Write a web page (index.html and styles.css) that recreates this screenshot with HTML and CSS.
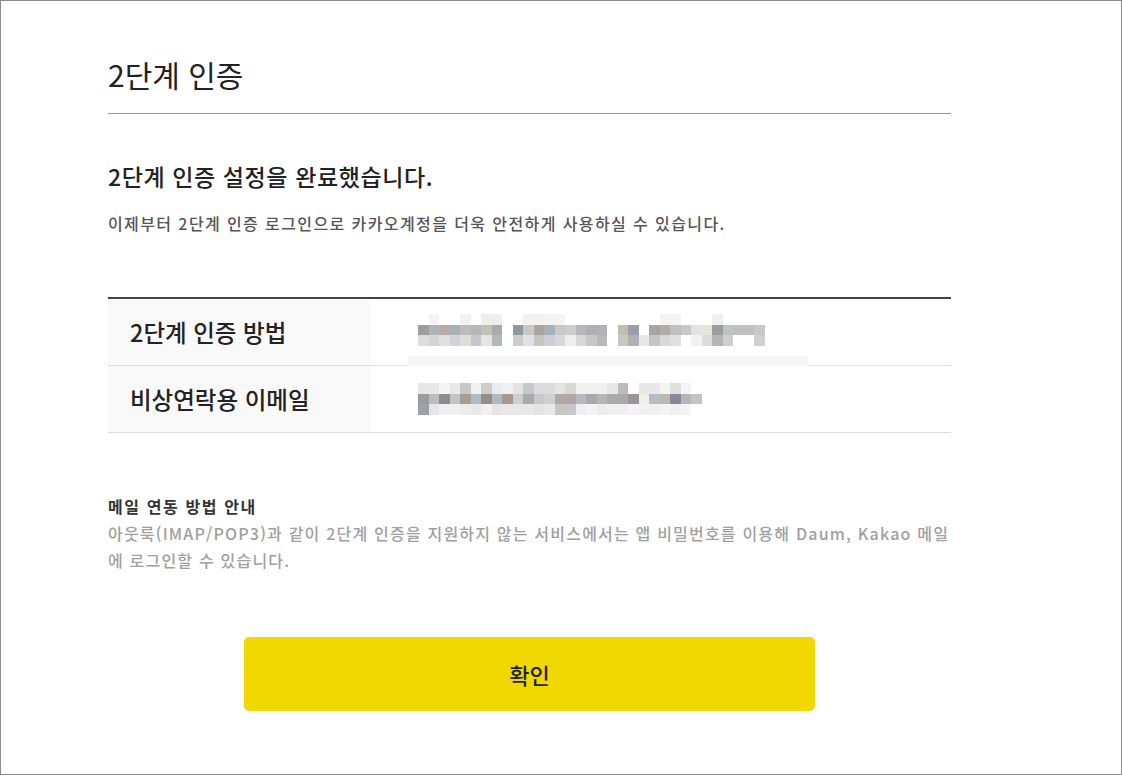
FILE: index.html
```html
<!DOCTYPE html>
<html lang="ko">
<head>
<meta charset="utf-8">
<title>2단계 인증</title>
<link rel="stylesheet" href="styles.css">
</head>
<body>
<div class="frame">
  <div class="content">
    <h1 class="title">2단계 인증</h1>
    <h2 class="done">2단계 인증 설정을 완료했습니다.</h2>
    <p class="desc">이제부터 2단계 인증 로그인으로 카카오계정을 더욱 안전하게 사용하실 수 있습니다.</p>

    <div class="info">
      <div class="row">
        <div class="th">2단계 인증 방법</div>
        <div class="td td-first">
          <div class="mosaic" data-set="0"></div>
          <div class="band"></div>
        </div>
      </div>
      <div class="row">
        <div class="th">비상연락용 이메일</div>
        <div class="td">
          <div class="mosaic" data-set="1"></div>
        </div>
      </div>
    </div>

    <div class="guide">
      <strong class="guide-title">메일 연동 방법 안내</strong>
      <p class="guide-text">아웃룩(IMAP/POP3)과 같이 2단계 인증을 지원하지 않는 서비스에서는 앱 비밀번호를 이용해 Daum, Kakao 메일에 로그인할 수 있습니다.</p>
    </div>

    <div class="actions">
      <button class="confirm" type="button">확인</button>
    </div>
  </div>
</div>
<script src="script.js"></script>
</body>
</html>
```

FILE: styles.css
```css
* { box-sizing: border-box; }
html, body { margin: 0; padding: 0; background: #fff; }
body {
  font-family: "Noto Sans CJK KR", "Noto Sans", sans-serif;
  color: #222;
}
.frame {
  width: 1122px;
  height: 775px;
  border: 1px solid #8a8a8a;
  overflow: hidden;
}
.content {
  width: 843px;
  margin-left: 107px;
  padding-top: 52px;
}
.title {
  margin: 0;
  font-size: 30px;
  font-weight: 400;
  line-height: 42px;
  color: #222;
  padding-bottom: 18px;
  border-bottom: 1px solid #949494;
}
.done {
  margin: 0;
  padding-top: 46px;
  font-size: 23px;
  font-weight: 500;
  line-height: 32px;
  letter-spacing: 0.6px;
  color: #222;
}
.desc {
  margin: 20px 0 0;
  font-size: 16px;
  font-weight: 500;
  line-height: 22px;
  color: #555;
  letter-spacing: 1.4px;
}
.info {
  margin-top: 63px;
  border-top: 2px solid #444;
}
.row {
  display: flex;
  height: 67px;
  border-bottom: 1px solid #ddd;
}
.th {
  width: 263px;
  background: #f9f9f9;
  padding-left: 22px;
  display: flex;
  align-items: center;
  font-size: 23.5px;
  font-weight: 500;
  color: #222;
}
.td {
  flex: 1;
  padding-left: 47px;
  display: flex;
  align-items: center;
  position: relative;
}
.td-first { padding-bottom: 4px; }
.mosaic {
  display: grid;
  grid-auto-rows: 10.5px;
}
.mosaic .mrow {
  display: flex;
}
.mosaic .cell {
  width: 10.5px;
  height: 10.5px;
  flex: none;
}
.band {
  position: absolute;
  left: 37px;
  width: 400px;
  bottom: -1px;
  height: 10px;
  background: #f6f6f6;
}
.guide {
  margin-top: 63px;
}
.guide-title {
  display: block;
  font-size: 16px;
  font-weight: 700;
  color: #333;
  line-height: 20px;
  letter-spacing: 1.6px;
}
.guide-text {
  margin: 4px 0 0;
  font-size: 16px;
  font-weight: 500;
  line-height: 27px;
  color: #a0a0a0;
  letter-spacing: 1.2px;
}
.actions {
  display: flex;
  justify-content: center;
  margin-top: 63px;
}
.confirm {
  width: 571px;
  height: 74px;
  border: 0;
  border-radius: 5px;
  background: #f0d800;
  font-family: "Noto Sans CJK KR", "Noto Sans", sans-serif;
  font-size: 22px;
  font-weight: 500;
  color: #1e1e1e;
  cursor: pointer;
}
```

FILE: script.js
```js
(function () {
  var W = "transparent";
  var sets = [
    [
      [W,"#f4f4f4",W,W,"#f2f2f2",W,"#f0eeec","#eceef0",W,W,"#f2f2f2","#f4f2ee","#f4f4f4","#f2f4f6",W,W,W,W,W,W,W,W,W,"#f6f4f0","#f4f4f4",W,W,W,"#f0f0f0",W,W,W,W],
      ["#9e9e9e","#b0b4b8","#b8aca4","#a8b0b8","#bcbcbc","#b4b8bc","#c4c0b8","#a8acb0",W,"#9098a0","#c8c8c8","#aca4a0","#a8b0b8","#c8c8c8","#cccccc","#b4b8bc","#b0b0b4","#b0b4b8",W,"#c0bcb0","#9a9eac",W,"#a8a4a4","#b4aca4","#c0c0c0","#c8c8c8","#e0e4e8","#e8e4dc","#9c9c9c","#c0c4c8","#c0c0c0","#c0c0c0","#c8c8c8"],
      ["#dcdcdc","#d4d4d8","#e0e0e0","#d0d4d8","#e0dcd8","#c4c8cc","#e4e4e4","#b4b8bc",W,"#d0cccc","#e0e0e4","#c8c4c0","#ccd0d4","#d8d8d8","#eceef0","#d8d8d8","#c8c8c8","#b8b8bc",W,"#c8c8c0","#b0b0b8","#e8e8e8","#c8c4c4","#d8d8d8","#e0e0e4",W,"#f4f0ec","#dcdcdc","#b8b4b4","#ccd0d4",W,W,"#d0d0d0"]
    ],
    [
      ["#e8e8e8","#e8e8e8","#f4f4f4","#e8e8e8","#c8c8c8","#f0f0f0","#d0ccc8","#e8ecf0","#f0f0f0","#e4e4e4","#c8c8cc","#d8dce0","#d8dcdc","#e4e4e4","#d8d8d8","#f0f0f0","#f0f0f0","#f0f0f0","#e8e8e8","#c0bcbc",W,"#e8e8e8","#e8e8e8","#f4f4f0","#e0e0e0","#f4f4f8",W],
      ["#9a9ca4","#c0bcb8","#8c8c94","#c4c4c4","#a89c94","#b0bcc4","#988c88","#b0b8c0","#a89890","#c8d0d4","#a8aab0","#c8c8c8","#d0d0d0","#b0a8a4","#b0a8a4","#b4bcc0","#a8a8b0","#b8b4b4","#b0a8a4","#a8a8b0","#9c9498","#f0f0e8","#b8bcc8","#c0b8b0","#88889c","#b8b4b8","#c4c4c8"],
      ["#a0a0a8","#e4e8ec","#f0f0f4","#f0f0f0","#ececec","#e8e8e8","#f0f0f0","#e8e4e4","#e8e8e8","#e8e8e8","#e8e8e8","#e4e4e4","#e8e8e8","#c8c4c0","#c4c8cc","#f0f0f0","#f4f4f4","#ececec","#f0f0f4","#f0f0f0","#f4f4f4","#f0f0f0","#f0f0f0","#f4f4f4","#f0f0f0","#f4f4f4",W]
    ]
  ];
  var boxes = document.querySelectorAll(".mosaic");
  boxes.forEach(function (box) {
    var data = sets[+box.getAttribute("data-set")];
    data.forEach(function (row) {
      var r = document.createElement("div");
      r.className = "mrow";
      row.forEach(function (c) {
        var s = document.createElement("span");
        s.className = "cell";
        s.style.background = c;
        r.appendChild(s);
      });
      box.appendChild(r);
    });
  });
})();
```
